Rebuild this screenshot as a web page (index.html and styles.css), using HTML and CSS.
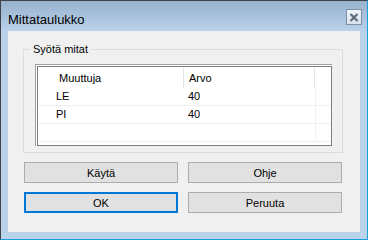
FILE: index.html
```html
<!DOCTYPE html>
<html lang="fi">
<head>
  <meta charset="UTF-8">
  <title>Mittataulukko</title>
  <link rel="stylesheet" href="styles.css">
</head>
<body>

  <div class="window">
    <div class="titlebar">
      <span class="title">Mittataulukko</span>
      <div class="close-btn">
        <svg width="10" height="9" viewBox="0 0 10 9">
          <path d="M1.5 1 L8.5 8 M8.5 1 L1.5 8" stroke="#5d6b7d" stroke-width="2.2"/>
        </svg>
      </div>
    </div>

    <div class="client">
      <div class="group">
        <span class="group-label">Syötä mitat</span>
        <div class="list-outer">
          <div class="list">
            <div class="list-head">
              <div class="col col-name">Muuttuja</div>
              <div class="col col-value">Arvo</div>
            </div>
            <div class="list-row">
              <div class="col col-name">LE</div>
              <div class="col col-value">40</div>
            </div>
            <div class="list-row">
              <div class="col col-name">PI</div>
              <div class="col col-value">40</div>
            </div>
            <div class="list-row">
              <div class="col col-name"></div>
              <div class="col col-value"></div>
            </div>
          </div>
        </div>
      </div>

      <div class="buttons">
        <button class="btn">Käytä</button>
        <button class="btn">Ohje</button>
        <button class="btn btn-default">OK</button>
        <button class="btn">Peruuta</button>
      </div>
    </div>
  </div>

</body>
</html>
```

FILE: styles.css
```css
body {
  margin: 0;
  padding: 0;
  background: #ffffff;
  font-family: 'Liberation Sans', Arial, sans-serif;
  font-size: 11px;
  color: #000;
}

.window {
  box-sizing: border-box;
  width: 368px;
  height: 240px;
  border-top: 1px solid #3e4349;
  border-left: 1px solid #3e4349;
  border-right: 1px solid #1aa0d8;
  border-bottom: 1px solid #1aa0d8;
  background: #bad2ea;
  display: flex;
  flex-direction: column;
}

.titlebar {
  height: 30px;
  display: flex;
  align-items: flex-start;
  justify-content: space-between;
  padding: 0 5px 0 7px;
  background: linear-gradient(to bottom, #98b2ce, #b9d1ea);
}

.title {
  font-size: 13px;
  margin-top: 11px;
  color: #000;
}

.close-btn {
  box-sizing: border-box;
  width: 16px;
  height: 16px;
  margin-top: 8px;
  border: 1px solid #7d8fa6;
  background: linear-gradient(to bottom, #eef3f8, #d8e3ee);
  display: flex;
  align-items: center;
  justify-content: center;
}

.client {
  flex: 1;
  margin: 0 7px 7px 7px;
  background: #f0f0f0;
  padding: 18px 17px 0 15px;
}

.group {
  position: relative;
  height: 104px;
  box-sizing: border-box;
  border: 1px solid #dcdcdc;
  padding: 14px 10px 0 11px;
}

.group-label {
  position: absolute;
  top: -7px;
  left: 6px;
  padding: 0 3px;
  background: #f0f0f0;
  line-height: 13px;
}

.list-outer {
  border-top: 1px solid #a0a0a0;
  border-left: 1px solid #a0a0a0;
  padding: 1px 0 0 1px;
  background: #fff;
}

.list {
  height: 78px;
  border: 1px solid #7a7e86;
  background: #fff;
  overflow: hidden;
}

.list-head {
  display: flex;
  height: 21px;
  line-height: 22px;
}

.list-head .col-name {
  padding-left: 21px;
  border-right: 1px solid #e5e5e5;
}

.list-head .col-value {
  padding-left: 5px;
  border-right: 1px solid #e5e5e5;
}

.col-name {
  box-sizing: border-box;
  width: 146px;
}

.col-value {
  box-sizing: border-box;
  width: 131px;
}

.list-row {
  display: flex;
  height: 17px;
  line-height: 17px;
  border-bottom: 1px solid #f0f0f0;
}

.list-row .col-name {
  padding-left: 18px;
}

.list-row .col-value {
  padding-left: 4px;
  width: 132px;
  border-right: 1px solid #f0f0f0;
}

.buttons {
  display: grid;
  grid-template-columns: 154px 154px;
  column-gap: 10px;
  row-gap: 9px;
  margin: 9px 0 0 1px;
}

.btn {
  height: 21px;
  padding: 0;
  font-family: 'Liberation Sans', Arial, sans-serif;
  font-size: 11px;
  color: #000;
  background: #e1e1e1;
  border: 1px solid #adadad;
}

.btn-default {
  border: 2px solid #0078d7;
}
```
